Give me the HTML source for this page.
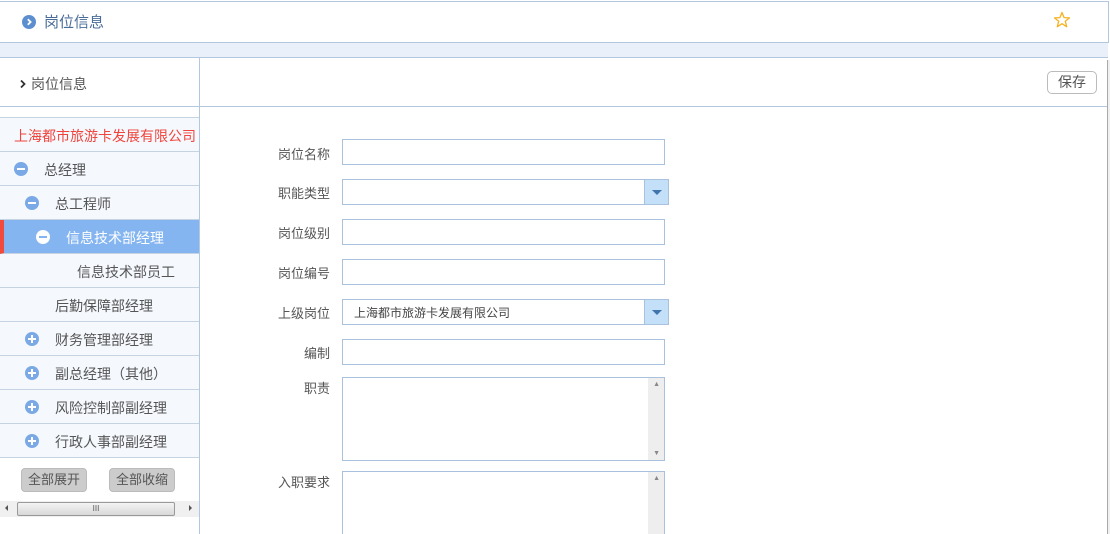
<!DOCTYPE html>
<html><head><meta charset="utf-8"><style>
*{box-sizing:border-box;margin:0;padding:0}
html,body{width:1110px;height:534px;overflow:hidden}
body{background:#fff;font-family:"Liberation Sans","Noto Sans CJK SC",sans-serif;font-size:13px;color:#444;position:relative}
.a{position:absolute}
.row{position:absolute;left:0;width:199px;height:34px;border-bottom:1px solid #c5d3e3;background:#f5f9fe;line-height:37px;font-size:14px;color:#555}
.ic{position:absolute;width:14px;height:14px;border-radius:50%;background:#7aa9e6;top:10px}
.ic:before{content:"";position:absolute;left:3px;top:6px;width:8px;height:2px;background:#fff}
.ic.p:after{content:"";position:absolute;left:6px;top:3px;width:2px;height:8px;background:#fff}
.lb{position:absolute;left:250px;width:80px;text-align:right;font-size:13px;color:#555}
.in{position:absolute;left:342px;width:323px;height:26px;border:1px solid #a9c1dc;background:#fff}
.sel{width:327px}
.sel .btn{position:absolute;right:0;top:0;width:24px;height:24px;background:#c4e0f8;border-left:1px solid #a9c1dc}
.sel .btn:after{content:"";position:absolute;left:7px;top:10px;border-left:5px solid transparent;border-right:5px solid transparent;border-top:5px solid #3f74ad}
.ta .sb{position:absolute;right:0;top:0;width:16px;height:100%;background:#eee}
.gb{position:absolute;top:468px;height:24px;width:66px;border-radius:4px;background:#ccc;border:1px solid #bbb;text-align:center;line-height:22px;color:#555;font-size:13px}
</style></head><body>
<div class="a" style="left:0;top:1px;width:1109px;height:42px;border:1px solid #b3c7df;border-left:none;background:#fff"></div>
<svg class="a" style="left:22px;top:15px" width="14" height="14" viewBox="0 0 14 14"><circle cx="7" cy="7" r="7" fill="#5d8fd0"/><path d="M5.8 4.2 L8.6 7 L5.8 9.8" fill="none" stroke="#fff" stroke-width="1.8"/></svg>
<div class="a" style="left:44px;top:11px;font-size:15px;color:#4a6c99">岗位信息</div>
<svg class="a" style="left:1053px;top:11px" width="18" height="18" viewBox="0 0 18 18"><path d="M9 1.5 L11.1 6.6 L16.5 6.9 L12.3 10.3 L13.7 15.7 L9 12.7 L4.3 15.7 L5.7 10.3 L1.5 6.9 L6.9 6.6 Z" fill="none" stroke="#f5b21f" stroke-width="1.3" stroke-linejoin="round"/></svg>
<div class="a" style="left:0;top:43px;width:1108px;height:15px;background:#e9f0fa;border-bottom:1px solid #b3c7df"></div>
<div class="a" style="left:1107px;top:60px;width:3px;height:474px;border-left:1px solid #aaa;background:#f0f0f0"></div>
<div class="a" style="left:199px;top:58px;width:1px;height:476px;background:#b3c7df"></div>
<div class="a" style="left:0;top:106px;width:1107px;height:1px;background:#b3c7df"></div>
<svg class="a" style="left:19px;top:79px" width="8" height="10" viewBox="0 0 8 10"><path d="M2 1.5 L5.5 5 L2 8.5" fill="none" stroke="#333" stroke-width="1.8"/></svg>
<div class="a" style="left:31px;top:74px;font-size:14px;color:#555">岗位信息</div>
<div class="a" style="left:1047px;top:71px;width:50px;height:23px;border:1px solid #bbb;border-radius:5px;text-align:center;line-height:21px;font-size:14px;color:#555">保存</div>
<div class="row" style="top:117px;height:35px;border-top:1px solid #c5d3e3;color:#f0443c;padding-left:14px;line-height:36px">上海都市旅游卡发展有限公司</div>
<div class="row" style="top:152px"><span class="ic" style="left:14px"></span><span class="a" style="left:44px">总经理</span></div>
<div class="row" style="top:186px"><span class="ic" style="left:25px"></span><span class="a" style="left:55px">总工程师</span></div>
<div class="row" style="top:220px;background:#84b5f0;color:#fff;border-left:4px solid #f04b3c"><span class="ic w" style="left:32px;background:#fff"></span><span class="a" style="left:62px">信息技术部经理</span></div>
<style>.row .ic.w:before{background:#84b5f0}</style>
<div class="row" style="top:254px"><span class="a" style="left:77px">信息技术部员工</span></div>
<div class="row" style="top:288px"><span class="a" style="left:55px">后勤保障部经理</span></div>
<div class="row" style="top:322px"><span class="ic p" style="left:25px"></span><span class="a" style="left:55px">财务管理部经理</span></div>
<div class="row" style="top:356px"><span class="ic p" style="left:25px"></span><span class="a" style="left:55px">副总经理（其他）</span></div>
<div class="row" style="top:390px"><span class="ic p" style="left:25px"></span><span class="a" style="left:55px">风险控制部副经理</span></div>
<div class="row" style="top:424px"><span class="ic p" style="left:25px"></span><span class="a" style="left:55px">行政人事部副经理</span></div>
<div class="gb" style="left:21px">全部展开</div>
<div class="gb" style="left:109px">全部收缩</div>
<div class="a" style="left:0;top:501px;width:199px;height:16px;background:#f0f0f0"></div>
<div class="a" style="left:17px;top:502px;width:158px;height:14px;border:1px solid #999;border-radius:2px;background:linear-gradient(#f4f4f4,#d8d8d8);text-align:center;font-size:8px;line-height:12px;color:#555">III</div>
<div class="a" style="left:5px;top:505px;border-top:3px solid transparent;border-bottom:3px solid transparent;border-right:3px solid #555"></div>
<div class="a" style="left:189px;top:505px;border-top:3px solid transparent;border-bottom:3px solid transparent;border-left:3px solid #555"></div>
<div class="lb" style="top:144px">岗位名称</div><div class="in" style="top:139px"></div>
<div class="lb" style="top:183px">职能类型</div><div class="in sel" style="top:179px"><div class="btn"></div></div>
<div class="lb" style="top:223px">岗位级别</div><div class="in" style="top:219px"></div>
<div class="lb" style="top:263px">岗位编号</div><div class="in" style="top:259px"></div>
<div class="lb" style="top:303px">上级岗位</div><div class="in sel" style="top:299px"><span class="a" style="left:11px;top:4px;font-size:12px;color:#444">上海都市旅游卡发展有限公司</span><div class="btn"></div></div>
<div class="lb" style="top:343px">编制</div><div class="in" style="top:339px"></div>
<div class="lb" style="top:378px">职责</div><div class="in ta" style="top:377px;height:84px"><div class="sb"></div><span class="a" style="right:4px;top:3px;font-size:7px;color:#888">▲</span><span class="a" style="right:4px;bottom:3px;font-size:7px;color:#888">▼</span></div>
<div class="lb" style="top:472px">入职要求</div><div class="in ta" style="top:471px;height:70px"><div class="sb"></div><span class="a" style="right:4px;top:3px;font-size:7px;color:#888">▲</span></div>
</body></html>
